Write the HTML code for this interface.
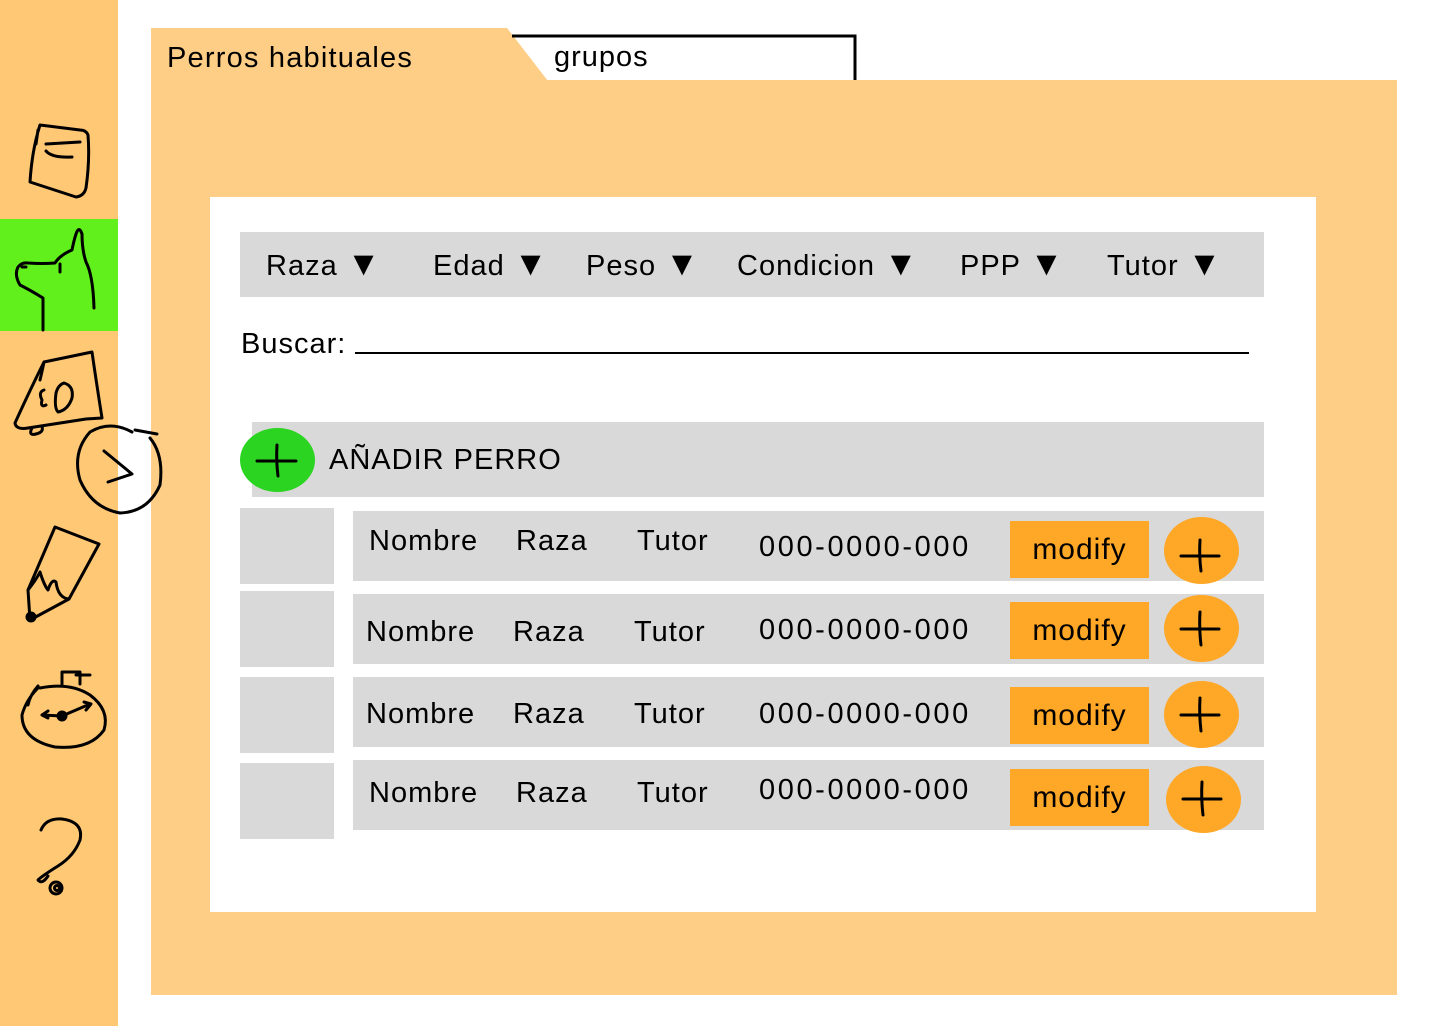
<!DOCTYPE html>
<html><head><meta charset="utf-8"><style>
body{margin:0;width:1440px;height:1026px;position:relative;background:#fff;font-family:"Liberation Sans",sans-serif;overflow:hidden;color:#000}
.a{position:absolute}
.g{background:#d9d9d9}
.t{position:absolute;font-size:29px;white-space:nowrap;letter-spacing:1px}
.p{letter-spacing:2.6px}
.tri{font-size:34px;letter-spacing:0}
.m{position:absolute;background:#ffa726;width:139px;height:57px;font-size:30px;line-height:57px;text-align:center;letter-spacing:1px}
svg{position:absolute;left:0;top:0}
</style></head><body>
<div class="a" style="left:0;top:0;width:118px;height:1026px;background:#ffc875"></div>
<div class="a" style="left:0;top:219px;width:118px;height:112px;background:#62f01c"></div>
<div class="a" style="left:151px;top:80px;width:1246px;height:915px;background:#fece87"></div>
<svg width="1440" height="1026">
<polygon points="151,28 507,28 548,81 151,81" fill="#fece87"/>
<polyline points="512,36 855,36 855,80" fill="none" stroke="#000" stroke-width="3"/>
</svg>
<div class="t" style="left:167px;top:42px;letter-spacing:1.2px">Perros habituales</div>
<div class="t" style="left:554px;top:41px">grupos</div>
<div class="a" style="left:210px;top:197px;width:1106px;height:715px;background:#fff"></div>
<div class="a g" style="left:240px;top:232px;width:1024px;height:65px"></div>
<div class="t" style="left:266px;top:245px">Raza <span class="tri">▼</span></div>
<div class="t" style="left:433px;top:245px">Edad <span class="tri">▼</span></div>
<div class="t" style="left:586px;top:245px">Peso <span class="tri">▼</span></div>
<div class="t" style="left:737px;top:245px">Condicion <span class="tri">▼</span></div>
<div class="t" style="left:960px;top:245px">PPP <span class="tri">▼</span></div>
<div class="t" style="left:1107px;top:245px">Tutor <span class="tri">▼</span></div>
<div class="t" style="left:241px;top:328px">Buscar:</div>
<div class="a" style="left:355px;top:352px;width:894px;height:2px;background:#000"></div>
<div class="a g" style="left:252px;top:422px;width:1012px;height:75px"></div>
<div class="a" style="left:240px;top:428px;width:75px;height:64px;border-radius:50%;background:#2ad420"></div>
<div class="t" style="left:329px;top:444px">AÑADIR PERRO</div>

<div class="a g" style="left:240px;top:508px;width:94px;height:76px"></div>
<div class="a g" style="left:353px;top:511px;width:911px;height:70px"></div>
<div class="a g" style="left:240px;top:591px;width:94px;height:76px"></div>
<div class="a g" style="left:353px;top:594px;width:911px;height:70px"></div>
<div class="a g" style="left:240px;top:677px;width:94px;height:76px"></div>
<div class="a g" style="left:353px;top:677px;width:911px;height:70px"></div>
<div class="a g" style="left:240px;top:763px;width:94px;height:76px"></div>
<div class="a g" style="left:353px;top:760px;width:911px;height:70px"></div>

<div class="t" style="left:369px;top:525px">Nombre</div><div class="t" style="left:516px;top:525px">Raza</div><div class="t" style="left:637px;top:525px">Tutor</div><div class="t p" style="left:759px;top:531px">000-0000-000</div>
<div class="t" style="left:366px;top:616px">Nombre</div><div class="t" style="left:513px;top:616px">Raza</div><div class="t" style="left:634px;top:616px">Tutor</div><div class="t p" style="left:759px;top:614px">000-0000-000</div>
<div class="t" style="left:366px;top:698px">Nombre</div><div class="t" style="left:513px;top:698px">Raza</div><div class="t" style="left:634px;top:698px">Tutor</div><div class="t p" style="left:759px;top:698px">000-0000-000</div>
<div class="t" style="left:369px;top:777px">Nombre</div><div class="t" style="left:516px;top:777px">Raza</div><div class="t" style="left:637px;top:777px">Tutor</div><div class="t p" style="left:759px;top:774px">000-0000-000</div>

<div class="m" style="left:1010px;top:521px">modify</div>
<div class="m" style="left:1010px;top:602px">modify</div>
<div class="m" style="left:1010px;top:687px">modify</div>
<div class="m" style="left:1010px;top:769px">modify</div>
<div class="a" style="left:1164px;top:517px;width:75px;height:67px;border-radius:50%;background:#ffa726"></div>
<div class="a" style="left:1164px;top:595px;width:75px;height:67px;border-radius:50%;background:#ffa726"></div>
<div class="a" style="left:1164px;top:681px;width:75px;height:67px;border-radius:50%;background:#ffa726"></div>
<div class="a" style="left:1166px;top:766px;width:75px;height:67px;border-radius:50%;background:#ffa726"></div>

<svg width="1440" height="1026" fill="none" stroke="#000" stroke-width="3" stroke-linecap="round" stroke-linejoin="round">
<path d="M257 461 H296 M277 445 Q276 460 278 476"/>
<path d="M1181 556 H1219 M1200 540 Q1199 556 1201 571"/>
<path d="M1181 629 H1219 M1200 612 Q1199 628 1201 645"/>
<path d="M1181 715 H1219 M1200 698 Q1199 714 1201 731"/>
<path d="M1183 799 H1221 M1202 782 Q1201 798 1203 815"/>
<path d="M40 125 Q32 150 30 182 L76 197 Q84 196 86 188 Q90 160 88 135 Q86 130 80 130 L40 125 M38 130 L36 144 M46 144 L80 142 M46 151 Q52 158 72 157"/>
<path d="M43 330 L43 298 Q30 290 20 285 Q14 275 18 267 Q22 262 28 263 Q42 264 55 263 Q60 255 72 250 Q74 240 76 234 Q79 225 82 234 Q82 250 86 262 Q93 275 94 308 M22 267 H26 M60 264 V272"/>
<path d="M44 362 L92 352 Q96 380 102 418 L86 419 M44 362 Q30 390 15 423 Q16 430 28 428 L86 419 M44 362 Q42 372 40 380 M32 428 Q28 436 36 434 Q44 432 42 427 M44 390 Q38 392 42 400 Q40 408 46 405 M56 393 Q54 408 58 412 Q68 410 72 398 Q74 386 64 383 Q58 385 56 393"/>
<path d="M132 432 Q110 420 90 432 Q72 452 80 480 Q92 508 120 513 Q148 512 160 485 Q164 455 150 438 M135 430 L157 434 M104 451 L132 474 L108 482"/>
<path d="M55 527 L99 544 L69 599 L30 620 L28 590 Z M28 590 Q36 580 40 572 Q44 585 48 590 Q52 578 56 582 Q58 598 69 599"/>
<circle cx="31" cy="617" r="4" fill="#000"/>
<path d="M38 688 Q26 700 22 715 Q22 740 55 747 Q90 750 104 730 Q110 710 90 695 Q70 682 40 688 M28 705 Q30 695 38 686 M62 684 V672 H80 V684 M76 675 H90 M42 715 L62 716 L90 704 M84 702 L91 704 L86 710 M42 715 L48 711 M42 715 L48 718"/>
<circle cx="62" cy="716" r="4" fill="#000"/>
<path d="M41 830 Q46 818 62 819 Q84 822 80 840 Q74 856 58 866 Q42 876 38 880 Q42 885 48 876"/>
<circle cx="56" cy="888" r="6"/><circle cx="57" cy="888" r="2.5"/>
</svg>
</body></html>
